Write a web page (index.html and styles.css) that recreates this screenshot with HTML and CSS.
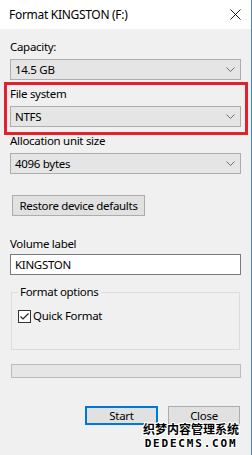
FILE: index.html
```html
<!DOCTYPE html>
<html>
<head>
    <title>Format KINGSTON (F:)</title>
    <link rel="stylesheet" href="styles.css">
</head>
<body>
    <div class="window">
        <div class="titlebar">
            <span class="title">Format KINGSTON (F:)</span>
            <svg class="close" width="11" height="11" viewBox="0 0 11 11">
                <path d="M0.5 0.5 L10.5 10.5 M10.5 0.5 L0.5 10.5" stroke="#1a1a1a" stroke-width="1" fill="none"/>
            </svg>
        </div>

        <div class="content">
            <div class="label">Capacity:</div>
            <div class="combo">
                <span>14.5 GB</span>
                <svg class="chevron" width="9" height="5" viewBox="0 0 9 5"><path d="M0.5 0.5 L4.5 4.5 L8.5 0.5" stroke="#6d6d6d" fill="none"/></svg>
            </div>

            <!-- highlighted section -->
            <div class="highlight">
                <div class="label">File system</div>
                <div class="combo">
                    <span>NTFS</span>
                    <svg class="chevron" width="9" height="5" viewBox="0 0 9 5"><path d="M0.5 0.5 L4.5 4.5 L8.5 0.5" stroke="#6d6d6d" fill="none"/></svg>
                </div>
            </div>

            <div class="label label-alloc">Allocation unit size</div>
            <div class="combo">
                <span>4096 bytes</span>
                <svg class="chevron" width="9" height="5" viewBox="0 0 9 5"><path d="M0.5 0.5 L4.5 4.5 L8.5 0.5" stroke="#6d6d6d" fill="none"/></svg>
            </div>

            <div class="btn btn-restore">Restore device defaults</div>

            <div class="label label-volume">Volume label</div>
            <div class="textbox">KINGSTON</div>

            <div class="group">
                <div class="legend">Format options</div>
                <div class="check-row">
                    <svg class="checkbox" width="13" height="13" viewBox="0 0 13 13">
                        <rect x="0.5" y="0.5" width="12" height="12" fill="#ffffff" stroke="#333333"/>
                        <path d="M2.5 6.5 L5 9 L10.5 3.5" stroke="#222222" stroke-width="1.2" fill="none"/>
                    </svg>
                    <span>Quick Format</span>
                </div>
            </div>

            <div class="progress"></div>

            <div class="actions">
                <div class="btn btn-start">Start</div>
                <div class="btn btn-close">Close</div>
            </div>
        </div>

        <div class="watermark">
            <div class="wm-cn">织梦内容管理系统</div>
            <div class="wm-en">DEDECMS.COM</div>
        </div>
    </div>
</body>
</html>
```

FILE: styles.css
```css
body {
    margin: 0;
    padding: 0;
    font-family: "Noto Sans", "Liberation Sans", sans-serif;
    font-size: 11.5px;
    letter-spacing: -0.3px;
    color: #000;
    background-color: #f0f0f0;
}

.window {
    position: relative;
    width: 251px;
    height: 455px;
    border-right: 1px solid #3b88c9;
    background-color: #f0f0f0;
}

.titlebar {
    height: 29px;
    background-color: #ffffff;
    display: flex;
    align-items: center;
    justify-content: space-between;
    padding: 0 10px 0 9px;
}

.title {
    font-size: 12px;
    line-height: 16px;
    color: #000;
}

.close {
    display: block;
}

.content {
    padding: 10px 10px 0 10px;
}

.label {
    line-height: 16px;
    height: 16px;
    margin-bottom: 4px;
}

.combo {
    height: 19px;
    border: 1px solid #adadad;
    background-color: #e5e5e5;
    display: flex;
    align-items: center;
    justify-content: space-between;
    padding: 0 5px 0 4px;
    line-height: 16px;
}

.highlight {
    border: 3px solid #e1212b;
    margin: 2px -7px 0 -6px;
    padding: 1px 4px 5px 3px;
}

.label-alloc {
    margin-top: -2px;
}

.btn {
    box-sizing: border-box;
    height: 21px;
    border: 1px solid #adadad;
    background-color: #e1e1e1;
    display: flex;
    align-items: center;
    justify-content: center;
    line-height: 16px;
}

.btn-restore {
    width: 133px;
    margin: 21px 0 0 2px;
}

.label-volume {
    margin-top: 20px;
    margin-bottom: 2px;
}

.textbox {
    height: 19px;
    border: 1px solid #7a7a7a;
    background-color: #ffffff;
    display: flex;
    align-items: center;
    padding-left: 4px;
    line-height: 16px;
}

.group {
    position: relative;
    margin: 17px 1px 0 1px;
    height: 56px;
    border: 1px solid #dcdcdc;
}

.legend {
    position: absolute;
    top: -9px;
    left: 6px;
    padding: 0 2px;
    background-color: #f0f0f0;
    line-height: 16px;
}

.check-row {
    display: flex;
    align-items: center;
    gap: 2px;
    margin: 15px 0 0 6px;
    line-height: 16px;
}

.checkbox {
    display: block;
}

.progress {
    height: 12px;
    margin: 14px 0 0 1px;
    border: 1px solid #bcbcbc;
    background-color: #e6e6e6;
}

.actions {
    display: flex;
    gap: 10px;
    margin: 28px 0 0 75px;
}

.btn-start {
    width: 73px;
    height: 19px;
    border: 2px solid #0078d7;
}

.btn-close {
    width: 72px;
    height: 19px;
}

/* watermark overlay */
.watermark {
    position: absolute;
    left: 143px;
    top: 423px;
    width: 96px;
    text-align: center;
    color: #000;
    letter-spacing: 0;
    text-shadow: 1px 0 0 #fff, -1px 0 0 #fff, 0 1px 0 #fff, 0 -1px 0 #fff, 1px 1px 0 #fff, -1px -1px 0 #fff, 1px -1px 0 #fff, -1px 1px 0 #fff;
}

.wm-cn {
    font-family: "Noto Sans CJK SC", sans-serif;
    font-weight: bold;
    font-size: 12px;
    line-height: 12px;
}

.wm-en {
    font-family: "DejaVu Sans Mono", monospace;
    font-weight: bold;
    font-size: 11px;
    line-height: 11px;
    letter-spacing: 1.8px;
    margin-top: 3px;
}
```
